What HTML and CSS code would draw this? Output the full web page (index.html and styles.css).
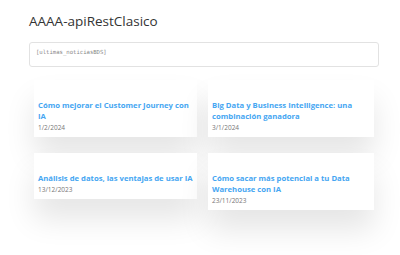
FILE: index.html
```html
<!DOCTYPE html>
<html lang="es">
<head>
    <meta charset="UTF-8">
    <title>AAAA-apiRestClasico</title>
    <link rel="stylesheet" href="styles.css">
</head>
<body>
    <div class="page">
        <h1 class="title">AAAA-apiRestClasico</h1>
        <div class="shortcode">[ultimas_noticiasBDS]</div>

        <div class="news-grid">
            <div class="news-card">
                <h3>Cómo mejorar el Customer Journey con IA</h3>
                <p class="date">1/2/2024</p>
            </div>
            <div class="news-card">
                <h3>Big Data y Business Intelligence: una combinación ganadora</h3>
                <p class="date">3/1/2024</p>
            </div>
            <div class="news-card">
                <h3>Análisis de datos, las ventajas de usar IA</h3>
                <p class="date">13/12/2023</p>
            </div>
            <div class="news-card">
                <h3>Cómo sacar más potencial a tu Data Warehouse con IA</h3>
                <p class="date">23/11/2023</p>
            </div>
        </div>
    </div>
</body>
</html>
```
FILE: styles.css
```css
body {
    margin: 0;
    padding: 0;
    min-height: 100vh;
    background: #fff;
    font-family: 'Open Sans', sans-serif;
    color: #333;
}
.page {
    width: 350px;
    padding: 13px 0 0 29px;
}
.title {
    margin: 0 0 12px;
    font-size: 13.5px;
    font-weight: 400;
    line-height: 17px;
    color: #333;
}
.shortcode {
    height: 25px;
    box-sizing: border-box;
    border: 1px solid #e2e2e2;
    border-radius: 3px;
    padding: 6px 6px 0;
    font-family: 'DejaVu Sans Mono', monospace;
    font-size: 5.6px;
    color: #888;
}
.news-grid {
    display: grid;
    grid-template-columns: 163px 166px;
    column-gap: 11px;
    row-gap: 16px;
    align-items: start;
    margin: 13px 5px 0;
}
.news-card {
    background: #fff;
    padding: 20px 4px 4px;
    box-shadow: 0 20px 30px rgba(0, 0, 0, 0.1);
}
.news-card h3 {
    margin: 0;
    font-size: 7.7px;
    font-weight: 700;
    line-height: 11px;
    color: #45a6f2;
}
.news-card .date {
    margin: 1px 0 0;
    font-size: 6.5px;
    line-height: 10px;
    color: #777;
}
```
